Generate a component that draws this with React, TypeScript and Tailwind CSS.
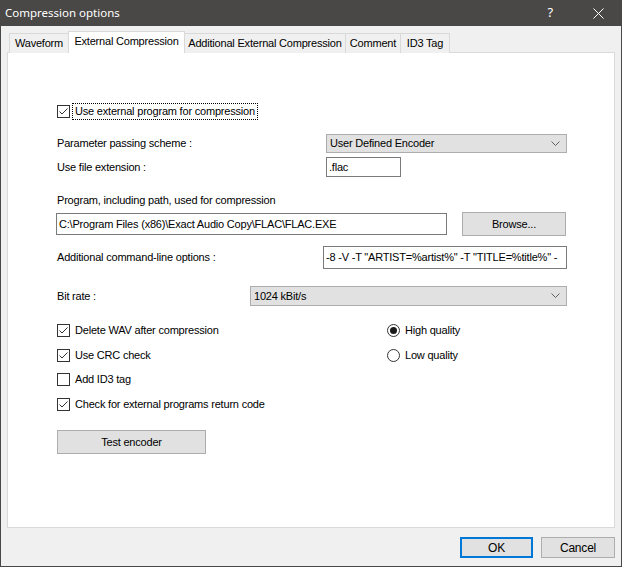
import React from 'react';

const font = { fontFamily: '"Liberation Sans", Arial, sans-serif', letterSpacing: '-0.2px' };

const Check = ({ checked }: { checked: boolean }) => (
  <div className="w-[13px] h-[13px] border border-[#333333] bg-white flex items-center justify-center shrink-0">
    {checked && (
      <svg width="11" height="11" viewBox="0 0 11 11">
        <path d="M1.5 5.5 L4 8 L9.5 2.5" fill="none" stroke="#333333" strokeWidth="1" />
      </svg>
    )}
  </div>
);

const Radio = ({ checked }: { checked: boolean }) => (
  <div className="w-[13px] h-[13px] rounded-full border border-[#333333] bg-white flex items-center justify-center shrink-0">
    {checked && <div className="w-[7px] h-[7px] rounded-full bg-[#1a1a1a]" />}
  </div>
);

const Chevron = () => (
  <svg width="9" height="6" viewBox="0 0 9 6">
    <path d="M0.5 0.5 L4.5 4.5 L8.5 0.5" fill="none" stroke="#606060" strokeWidth="1" />
  </svg>
);

const tabs = [
  { label: 'Waveform', w: 'w-[60px]' },
  { label: 'External Compression', w: 'w-[117px]', active: true },
  { label: 'Additional External Compression', w: 'w-[162px]' },
  { label: 'Comment', w: 'w-[56px]' },
  { label: 'ID3 Tag', w: 'w-[50px]' },
];

const CheckRow = ({ checked, label, className = '' }: { checked: boolean; label: string; className?: string }) => (
  <div className={`h-[18px] flex items-center ${className}`}>
    <Check checked={checked} />
    <span className="ml-[5px] text-[11px] text-black">{label}</span>
  </div>
);

const App = () => {
  return (
    <div className="w-[622px] h-[567px] bg-[#f0f0f0] border-x border-b border-[#4a4846] flex flex-col" style={font}>
      {/* Title bar */}
      <div className="h-[26px] bg-[#4a4846] flex items-center justify-between -mx-px">
        <span className="ml-[5px] text-[11.5px] text-white" style={{ fontFamily: '"Noto Sans", "Open Sans", sans-serif', letterSpacing: '0px' }}>
          Compression options
        </span>
        <div className="flex items-center h-full">
          <span className="text-[13px] text-white mr-[40px]" style={{ fontFamily: '"Noto Sans", sans-serif' }}>?</span>
          <svg width="11" height="11" viewBox="0 0 11 11" className="mr-[18px]">
            <path d="M0.5 0.5 L10.5 10.5 M10.5 0.5 L0.5 10.5" stroke="#ffffff" strokeWidth="1" />
          </svg>
        </div>
      </div>

      {/* Tabs + panel */}
      <div className="pt-[6px] pl-[6px] pr-[6px]">
        <div className="flex items-end h-[21px] pl-[2px] relative z-10 -mb-px">
          {tabs.map((t, i) =>
            t.active ? (
              <div
                key={t.label}
                className={`${t.w} h-[22px] -ml-px bg-white border border-b-0 border-[#d9d9d9] flex items-center justify-center text-[11px] text-black pb-[2px]`}
              >
                {t.label}
              </div>
            ) : (
              <div
                key={t.label}
                className={`${t.w} h-[20px] ${i === 0 ? '' : '-ml-px'} bg-[#f0f0f0] border border-[#d9d9d9] border-b-0 flex items-center justify-center text-[11px] text-black`}
              >
                {t.label}
              </div>
            )
          )}
        </div>
        <div className="h-[476px] bg-white border border-[#d9d9d9] flex flex-col pl-[49px] pr-[47px]">
          {/* Use external program */}
          <div className="mt-[50px] h-[17px] flex items-center">
            <Check checked />
            <span className="ml-[2px] h-[17px] px-[2px] border border-dotted border-black flex items-center text-[11px] text-black">
              Use external program for compression
            </span>
          </div>

          {/* Parameter passing scheme */}
          <div className="mt-[14px] h-[19px] flex items-center">
            <span className="w-[269px] text-[11px] text-black">Parameter passing scheme :</span>
            <div className="flex-1 h-[19px] bg-[#e1e1e1] border border-[#adadad] flex items-center justify-between pl-[3px] pr-[6px]">
              <span className="text-[11px] text-black">User Defined Encoder</span>
              <Chevron />
            </div>
          </div>

          {/* File extension */}
          <div className="mt-[4px] h-[20px] flex items-center">
            <span className="w-[269px] text-[11px] text-black">Use file extension :</span>
            <div className="w-[75px] h-[20px] bg-white border border-[#7a7a7a] flex items-center pl-[2px] text-[11px] text-black">
              .flac
            </div>
          </div>

          {/* Program path label */}
          <div className="mt-[16px] h-[14px] flex items-center text-[11px] text-black">
            Program, including path, used for compression
          </div>

          {/* Program path + Browse */}
          <div className="mt-[5px] h-[24px] flex items-center -ml-px">
            <div className="w-[391px] h-[22px] bg-white border border-[#7a7a7a] flex items-center pl-[2px] text-[11px] text-black">
              C:\Program Files (x86)\Exact Audio Copy\FLAC\FLAC.EXE
            </div>
            <div className="ml-[15px] w-[104px] h-[24px] bg-[#e1e1e1] border border-[#adadad] flex items-center justify-center text-[11px] text-black">
              Browse...
            </div>
          </div>

          {/* Additional options */}
          <div className="mt-[10px] h-[23px] flex items-center">
            <span className="w-[266px] text-[11px] text-black">Additional command-line options :</span>
            <div className="flex-1 h-[23px] bg-white border border-[#7a7a7a] flex items-center pl-[2px] text-[11px] text-black overflow-hidden whitespace-nowrap">
              -8 -V -T "ARTIST=%artist%" -T "TITLE=%title%" -
            </div>
          </div>

          {/* Bit rate */}
          <div className="mt-[17px] h-[20px] flex items-center">
            <span className="w-[193px] text-[11px] text-black">Bit rate :</span>
            <div className="flex-1 h-[20px] bg-[#e1e1e1] border border-[#adadad] flex items-center justify-between pl-[3px] pr-[6px]">
              <span className="text-[11px] text-black">1024 kBit/s</span>
              <Chevron />
            </div>
          </div>

          {/* Checkboxes + radios */}
          <div className="mt-[15px] flex">
            <div className="w-[330px] flex flex-col">
              <CheckRow checked label="Delete WAV after compression" />
              <CheckRow checked label="Use CRC check" className="mt-[7px]" />
              <CheckRow checked={false} label="Add ID3 tag" className="mt-[6px]" />
              <CheckRow checked label="Check for external programs return code" className="mt-[7px]" />
            </div>
            <div className="flex flex-col">
              <div className="h-[18px] flex items-center">
                <Radio checked />
                <span className="ml-[5px] text-[11px] text-black">High quality</span>
              </div>
              <div className="mt-[7px] h-[18px] flex items-center">
                <Radio checked={false} />
                <span className="ml-[5px] text-[11px] text-black">Low quality</span>
              </div>
            </div>
          </div>

          {/* Test encoder */}
          <div className="mt-[17px] w-[149px] h-[24px] bg-[#e1e1e1] border border-[#adadad] flex items-center justify-center text-[11px] text-black">
            Test encoder
          </div>
        </div>
      </div>

      {/* Bottom buttons */}
      <div className="flex justify-end gap-[8px] pr-[6px] mt-[9px]">
        <div className="w-[73px] h-[21px] bg-[#e1e1e1] border-2 border-[#0078d7] flex items-center justify-center text-[12px] text-black">
          OK
        </div>
        <div className="w-[74px] h-[21px] bg-[#e1e1e1] border border-[#adadad] flex items-center justify-center text-[12px] text-black">
          Cancel
        </div>
      </div>
    </div>
  );
};

export default App;
